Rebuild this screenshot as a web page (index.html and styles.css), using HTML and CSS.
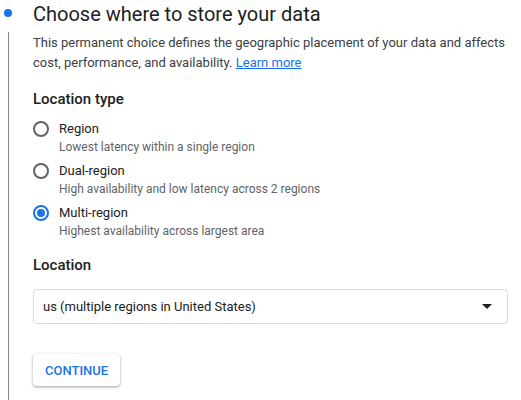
FILE: index.html
```html
<!DOCTYPE html>
<html lang="en">
<head>
    <meta charset="UTF-8">
    <meta name="viewport" content="width=device-width, initial-scale=1.0">
    <title>Create bucket - Location</title>
    <link rel="stylesheet" href="styles.css">
</head>
<body>
    <div class="step">
        <div class="step-rail">
            <span class="step-dot"></span>
            <span class="step-line"></span>
        </div>

        <div class="step-body">
            <h2 class="step-title">Choose where to store your data</h2>
            <p class="step-desc">
                This permanent choice defines the geographic placement of your data and affects
                cost, performance, and availability. <a href="#">Learn more</a>
            </p>

            <h3 class="field-title">Location type</h3>
            <div class="radio-group">
                <label class="radio-option">
                    <span class="radio"></span>
                    <span class="radio-text">
                        <span class="radio-label">Region</span>
                        <span class="radio-hint">Lowest latency within a single region</span>
                    </span>
                </label>
                <label class="radio-option">
                    <span class="radio"></span>
                    <span class="radio-text">
                        <span class="radio-label">Dual-region</span>
                        <span class="radio-hint">High availability and low latency across 2 regions</span>
                    </span>
                </label>
                <label class="radio-option">
                    <span class="radio checked"></span>
                    <span class="radio-text">
                        <span class="radio-label">Multi-region</span>
                        <span class="radio-hint">Highest availability across largest area</span>
                    </span>
                </label>
            </div>

            <h3 class="field-title">Location</h3>
            <div class="select">
                <span class="select-value">us (multiple regions in United States)</span>
                <span class="select-arrow"></span>
            </div>

            <button type="button" class="btn">Continue</button>
        </div>
    </div>
</body>
</html>
```

FILE: styles.css
```css
:root {
    --blue: #1a73e8;
    --text: #202124;
    --text-body: #3c4043;
    --text-muted: #5f6368;
    --border: #dadce0;
}

* {
    margin: 0;
    padding: 0;
    box-sizing: border-box;
}

body {
    font-family: Roboto, 'Noto Sans', sans-serif;
    color: var(--text);
    background: white;
    min-height: 100vh;
}

.step {
    display: flex;
    min-height: 400px;
}

.step-rail {
    width: 33px;
    flex-shrink: 0;
    display: flex;
    flex-direction: column;
}

.step-dot {
    width: 8px;
    height: 8px;
    margin: 9px 0 0 4px;
    border-radius: 50%;
    background: var(--blue);
}

.step-line {
    flex: 1;
    width: 1px;
    margin: 15px 0 0 8px;
    background: #80868b;
}

.step-body {
    flex: 1;
    padding-right: 13px;
}

.step-title {
    font-size: 20px;
    font-weight: 400;
    line-height: 28px;
    color: var(--text);
}

.step-desc {
    margin-top: 5px;
    margin-right: -8px;
    font-size: 13px;
    line-height: 20px;
    color: var(--text-body);
}

.step-desc a {
    color: var(--blue);
}

.field-title {
    margin-top: 14px;
    font-size: 15px;
    font-weight: 500;
    line-height: 24px;
    color: var(--text);
}

.radio-group {
    margin-top: 8px;
    display: flex;
    flex-direction: column;
    gap: 6px;
}

.radio-option {
    display: flex;
    gap: 10px;
    cursor: pointer;
}

.radio {
    width: 16px;
    height: 16px;
    margin-top: 2px;
    border: 2px solid var(--text-muted);
    border-radius: 50%;
    display: flex;
    align-items: center;
    justify-content: center;
    flex-shrink: 0;
}

.radio.checked {
    border-color: var(--blue);
}

.radio.checked::after {
    content: '';
    width: 8px;
    height: 8px;
    border-radius: 50%;
    background: var(--blue);
}

.radio-text {
    display: flex;
    flex-direction: column;
}

.radio-label {
    font-size: 13px;
    line-height: 20px;
    color: var(--text);
}

.radio-hint {
    font-size: 12px;
    line-height: 16px;
    color: var(--text-muted);
}

.field-title + .select {
    margin-top: 12px;
}

.select {
    display: flex;
    align-items: center;
    justify-content: space-between;
    height: 35px;
    padding: 0 15px 0 9px;
    border: 1px solid var(--border);
    border-radius: 4px;
}

.select-value {
    font-size: 13px;
    line-height: 20px;
    color: var(--text);
}

.select-arrow {
    width: 0;
    height: 0;
    border-left: 5px solid transparent;
    border-right: 5px solid transparent;
    border-top: 5px solid var(--text);
}

.btn {
    margin-top: 30px;
    height: 32px;
    padding: 0 12px;
    border: none;
    border-radius: 4px;
    background: white;
    color: var(--blue);
    font-family: Roboto, sans-serif;
    font-size: 13px;
    font-weight: 500;
    text-transform: uppercase;
    cursor: pointer;
    box-shadow: 0 1px 2px rgba(60, 64, 67, 0.3), 0 1px 3px 1px rgba(60, 64, 67, 0.15);
}
```
